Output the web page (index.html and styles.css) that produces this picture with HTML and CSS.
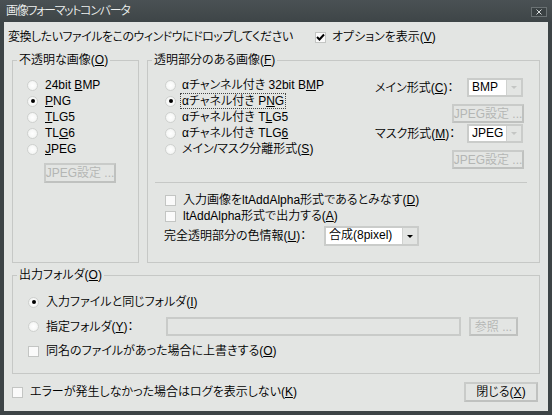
FILE: index.html
```html
<!DOCTYPE html>
<html lang="ja">
<head>
<meta charset="utf-8">
<title>画像フォーマットコンバータ</title>
<link rel="stylesheet" href="styles.css">
</head>
<body>
<div class="window">
  <div class="titlebar">
    <span class="title">画像フォーマットコンバータ</span>
    <span class="close"><svg width="16" height="10" viewBox="0 0 16 10"><rect x="0.5" y="0.5" width="15" height="9" fill="#3a4143" stroke="#6b7274"/><path d="M5.5 2.5 L10.5 7.5 M10.5 2.5 L5.5 7.5" stroke="#d8dcdc" stroke-width="1"/></svg></span>
  </div>
  <div class="client">
    <div class="toprow">
      <span class="droptext">変換したいファイルをこのウィンドウにドロップしてください</span>
      <span class="item"><span class="chk on"><svg width="9" height="9" viewBox="0 0 9 9"><path d="M1 4 L3.5 6.5 L8 1.5" fill="none" stroke="#000" stroke-width="2"/></svg></span><span>オプションを表示(<u>V</u>)</span></span>
    </div>

    <div class="groups">
      <fieldset class="group g1">
        <legend>不透明な画像(<u>O</u>)</legend>
        <div class="radiolist">
          <div class="row"><span class="radio"></span><span>24bit <u>B</u>MP</span></div>
          <div class="row"><span class="radio on"></span><span><u>P</u>NG</span></div>
          <div class="row"><span class="radio"></span><span><u>T</u>LG5</span></div>
          <div class="row"><span class="radio"></span><span>TL<u>G</u>6</span></div>
          <div class="row"><span class="radio"></span><span><u>J</u>PEG</span></div>
        </div>
        <span class="btn disabled g1btn">JPEG設定 ...</span>
      </fieldset>

      <fieldset class="group g2">
        <legend>透明部分のある画像(<u>F</u>)</legend>
        <div class="g2main">
          <div class="radiolist g2list">
            <div class="row"><span class="radio"></span><span>αチャンネル付き 32bit B<u>M</u>P</span></div>
            <div class="row"><span class="radio on"></span><span class="focus">αチャネル付き P<u>N</u>G</span></div>
            <div class="row"><span class="radio"></span><span>αチャネル付き T<u>L</u>G5</span></div>
            <div class="row"><span class="radio"></span><span>αチャネル付き TLG<u>6</u></span></div>
            <div class="row"><span class="radio"></span><span>メイン/マスク分離形式(<u>S</u>)</span></div>
          </div>
          <div class="formats">
            <div class="frow">
              <span class="flabel">メイン形式(<u>C</u>)：</span>
              <span class="combo small"><span class="cval">BMP</span><span class="cbtn dim"></span></span>
            </div>
            <span class="btn disabled fbtn">JPEG設定 ...</span>
            <div class="frow frow2">
              <span class="flabel">マスク形式(<u>M</u>)：</span>
              <span class="combo small"><span class="cval">JPEG</span><span class="cbtn dim"></span></span>
            </div>
            <span class="btn disabled fbtn">JPEG設定 ...</span>
          </div>
        </div>
        <div class="sep"></div>
        <div class="checks">
          <div class="row"><span class="chk"></span><span>入力画像をltAddAlpha形式であるとみなす(<u>D</u>)</span></div>
          <div class="row"><span class="chk"></span><span>ltAddAlpha形式で出力する(<u>A</u>)</span></div>
        </div>
        <div class="colorrow">
          <span class="clabel">完全透明部分の色情報(<u>U</u>)：</span>
          <span class="combo wide"><span class="cval">合成(8pixel)</span><span class="cbtn"></span></span>
        </div>
      </fieldset>
    </div>

    <fieldset class="group g3">
      <legend>出力フォルダ(<u>O</u>)</legend>
      <div class="row orow1"><span class="radio on"></span><span>入力ファイルと同じフォルダ(<u>I</u>)</span></div>
      <div class="row orow2"><span class="radio"></span><span class="olabel">指定フォルダ(<u>Y</u>)：</span><span class="field"></span><span class="btn disabled refbtn">参照 ...</span></div>
      <div class="row orow3"><span class="chk"></span><span>同名のファイルがあった場合に上書きする(<u>O</u>)</span></div>
    </fieldset>

    <div class="bottom">
      <div class="row"><span class="chk"></span><span>エラーが発生しなかった場合はログを表示しない(<u>K</u>)</span></div>
      <span class="btn closebtn"><span>閉じる(<u>X</u>)</span></span>
    </div>
  </div>
</div>
</body>
</html>
```

FILE: styles.css
```css
html, body {
  margin: 0;
  padding: 0;
}
body {
  width: 552px;
  height: 415px;
  overflow: hidden;
  background: #3d4446;
  font-family: "Liberation Sans", "Noto Sans CJK JP", sans-serif;
  font-size: 12px;
  font-weight: 350;
  line-height: 16px;
  color: #000;
  font-feature-settings: "palt";
}
u { text-decoration: underline; text-underline-offset: 1px; }

.window { width: 552px; height: 415px; }

.titlebar {
  height: 22px;
  display: flex;
  align-items: center;
  padding: 0 5px 0 6px;
  background: linear-gradient(#4a5154, #3e4547);
  color: #eef0ef;
  box-sizing: border-box;
}
.title { flex: 1; font-size: 12px; letter-spacing: -1.3px; }
.close { display: flex; width: 16px; height: 10px; margin-top: 1px; }

.client {
  margin: 0 4px;
  height: 389px;
  background: #e3e5e3;
  padding: 7px 8px 0 8px;
  box-sizing: border-box;
}

.toprow { display: flex; align-items: center; height: 16px; }
.droptext { flex: 0 0 307px; margin-left: -4px; white-space: nowrap; letter-spacing: -0.5px; }
.item { display: flex; align-items: center; }
.item .chk { margin-right: 6px; }

.row { display: flex; align-items: center; height: 16px; white-space: nowrap; }

.radio {
  width: 11px;
  height: 11px;
  box-sizing: border-box;
  border-radius: 50%;
  border: 1px solid #cfd1cf;
  background: radial-gradient(circle at 50% 50%, #ffffff 0, #f6f7f6 60%, #e9ebe9 100%);
  display: flex;
  align-items: center;
  justify-content: center;
  margin-right: 7px;
  flex: none;
}
.radio.on::after {
  content: "";
  width: 4px;
  height: 4px;
  border-radius: 50%;
  background: #000;
}

.chk {
  width: 11px;
  height: 11px;
  box-sizing: border-box;
  border: 1px solid #c3c5c3;
  background: #fafafa;
  display: flex;
  align-items: center;
  justify-content: center;
  margin-right: 7px;
  flex: none;
}

.groups { display: flex; gap: 8px; margin-top: 7px; }

.group {
  margin: 0;
  padding: 0;
  border: 1px solid #c6c8c6;
  min-width: 0;
  box-sizing: border-box;
}
.group legend {
  padding: 0 2px;
  margin-left: 4px;
  line-height: 16px;
}
.g1 { width: 127px; height: 211px; }
.g2 { width: 393px; height: 211px; }

.radiolist { padding-top: 9px; padding-left: 14px; }

.btn {
  display: flex;
  align-items: center;
  justify-content: center;
  box-sizing: border-box;
  height: 20px;
  border: 2px solid #c9cbc9;
  border-right-color: #bfc1bf;
  border-bottom-color: #bfc1bf;
  background: #e3e5e3;
  white-space: nowrap;
}
.btn.disabled { color: #b4b6b4; }
.g1btn { width: 72px; margin: 6px 0 0 31px; }

.g2main { display: flex; }
.g2list { width: 211px; padding-left: 17px; }
.g2list .radio { margin-right: 6px; }
.focus { outline: 1px dotted #444; outline-offset: 0; padding: 0 1px; margin-left: -1px; line-height: 14px; }

.formats {
  width: 148px;
  padding-top: 10px;
  display: flex;
  flex-direction: column;
  align-items: flex-end;
}
.frow { display: flex; align-items: center; width: 148px; height: 19px; }
.flabel { flex: 1; white-space: nowrap; }
.fbtn { width: 72px; height: 19px; margin-top: 7px; }
.frow2 { margin-top: 1px; margin-right: 1px; }
.frow:first-child { margin-right: 1px; }

.combo {
  display: flex;
  box-sizing: border-box;
  height: 19px;
  border: 2px solid #cacccA;
  background: #fff;
}
.combo.small { width: 56px; }
.combo.wide { width: 95px; height: 20px; }
.cval { flex: 1; padding-left: 3px; line-height: 15px; font-size: 12px; white-space: nowrap; }
.cbtn {
  width: 14px;
  background: #e3e5e3;
  border-left: 1px solid #d0d2d0;
  display: flex;
  align-items: center;
  justify-content: center;
}
.cbtn::after {
  content: "";
  border-left: 3px solid transparent;
  border-right: 3px solid transparent;
  border-top: 3px solid #000;
}
.cbtn.dim::after { border-top-color: #c4c6c4; }

.sep {
  height: 0;
  border-top: 1px solid #c6c8c6;
  margin: 13px 12px 0 7px;
}
.checks { padding-top: 9px; padding-left: 17px; }

.colorrow { display: flex; align-items: center; margin-top: 2px; padding-left: 16px; height: 20px; }
.clabel { width: 160px; white-space: nowrap; }

.g3 { width: 528px; height: 107px; margin-top: 4px; }
.g3 .row { padding-left: 15px; }
.orow1 { margin-top: 11px; }
.orow2 { margin-top: 7px; height: 19px; }
.orow3 { margin-top: 7px; }
.olabel { width: 120px; }
.field {
  width: 295px;
  height: 19px;
  box-sizing: border-box;
  border: 2px solid #c9cbc9;
  background: #e3e5e3;
}
.refbtn { width: 49px; height: 19px; margin-left: 8px; }

.bottom {
  display: flex;
  align-items: center;
  justify-content: space-between;
  margin-top: 8px;
  padding-right: 2px;
}
.closebtn { width: 74px; height: 20px; }
```
